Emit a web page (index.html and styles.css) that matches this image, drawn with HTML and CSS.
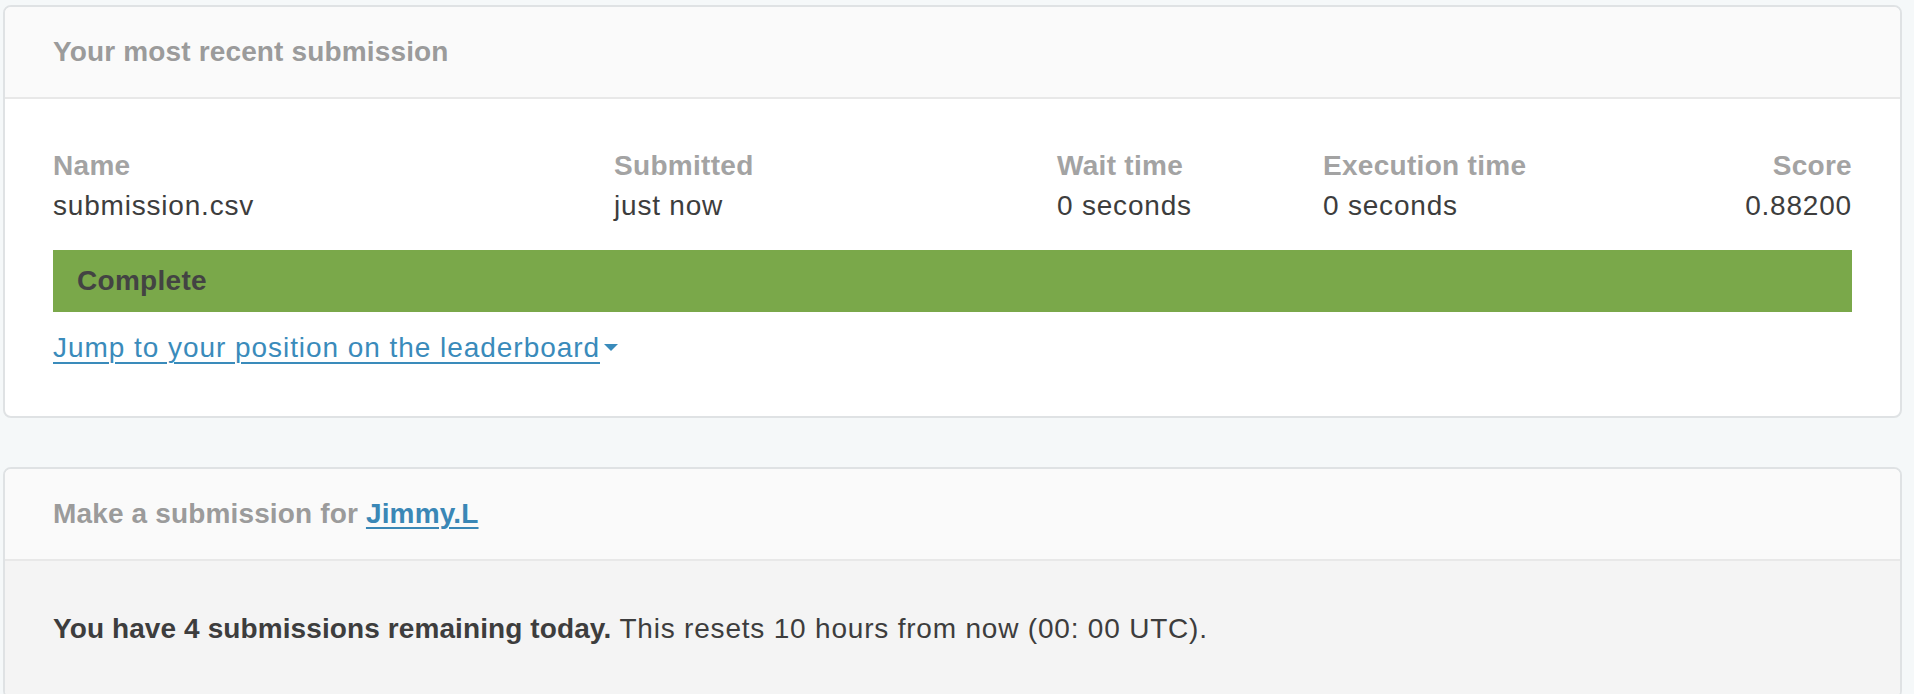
FILE: index.html
```html
<!DOCTYPE html>
<html lang="en">
<head>
<meta charset="utf-8">
<title>Submissions</title>
<link rel="stylesheet" href="styles.css">
</head>
<body>
<main class="page">
  <section class="card">
    <header class="card-header">
      <h2 class="card-title">Your most recent submission</h2>
    </header>
    <div class="card-body">
      <div class="sub-grid">
        <div class="cell"><div class="label">Name</div><div class="value">submission.csv</div></div>
        <div class="cell"><div class="label">Submitted</div><div class="value">just now</div></div>
        <div class="cell"><div class="label">Wait time</div><div class="value">0 seconds</div></div>
        <div class="cell"><div class="label">Execution time</div><div class="value">0 seconds</div></div>
        <div class="cell cell-right"><div class="label">Score</div><div class="value">0.88200</div></div>
      </div>
      <div class="status-bar">Complete</div>
      <a class="jump-link" href="#"><span class="jump-text">Jump to your position on the leaderboard</span><svg class="caret" width="16" height="9" viewBox="0 0 16 9"><path d="M1 1 L15 1 L8 8 Z" fill="#3a8bbb"/></svg></a>
    </div>
  </section>

  <section class="card">
    <header class="card-header">
      <h2 class="card-title">Make a submission for <a class="user-link" href="#">Jimmy.L</a></h2>
    </header>
    <div class="card-body card-body-gray">
      <p class="remaining"><strong>You have 4 submissions remaining today.</strong> This resets 10 hours from now (00: 00 UTC).</p>
    </div>
  </section>
</main>
</body>
</html>
```

FILE: styles.css
```css
html, body {
  margin: 0;
  padding: 0;
  background: #f5f8f9;
}
body {
  font-family: "Liberation Sans", Arial, sans-serif;
  font-size: 28px;
  line-height: 40px;
  color: #404040;
  letter-spacing: 0.8px;
}
.page {
  padding: 5px 12px 0 3px;
  display: flex;
  flex-direction: column;
  gap: 49px;
}
.card {
  background: #ffffff;
  border: 2px solid #dfe2e4;
  border-radius: 8px;
  overflow: hidden;
}
.card-header {
  background: #fafafa;
  border-bottom: 2px solid #e8e8e8;
  padding: 25px 48px 25px 48px;
}
.card-title {
  margin: 0;
  font-size: 28px;
  line-height: 40px;
  font-weight: 700;
  color: #9b9b9b;
  letter-spacing: 0.15px;
}
.user-link {
  color: #3a87b6;
  text-decoration: underline;
  text-decoration-thickness: 2px;
  text-underline-offset: 4px;
}
.card-body {
  padding: 47px 48px 48px 48px;
}
.card-body-gray {
  background: #f4f4f4;
  padding-top: 48px;
}
.sub-grid {
  display: grid;
  grid-template-columns: 561px 443px 266px 1fr 1fr;
}
.cell-right {
  text-align: right;
}
.label {
  font-weight: 700;
  color: #a3a3a3;
  letter-spacing: 0.3px;
}
.value {
  color: #3d3d3d;
}
.status-bar {
  margin-top: 24px;
  background: #7aa84a;
  height: 62px;
  line-height: 62px;
  padding: 0 24px;
  font-weight: 700;
  color: #434343;
  letter-spacing: 0.3px;
}
.jump-link {
  display: inline-flex;
  align-items: center;
  gap: 3px;
  margin-top: 16px;
  color: #3a8bbb;
  text-decoration: none;
}
.jump-text {
  text-decoration: underline;
  text-decoration-thickness: 2px;
  text-underline-offset: 5px;
  letter-spacing: 0.95px;
}
.caret {
  display: block;
  margin-top: -2px;
}
.remaining {
  margin: 0;
  color: #3d3d3d;
}
.remaining strong {
  font-weight: 700;
  letter-spacing: 0.1px;
}
```
